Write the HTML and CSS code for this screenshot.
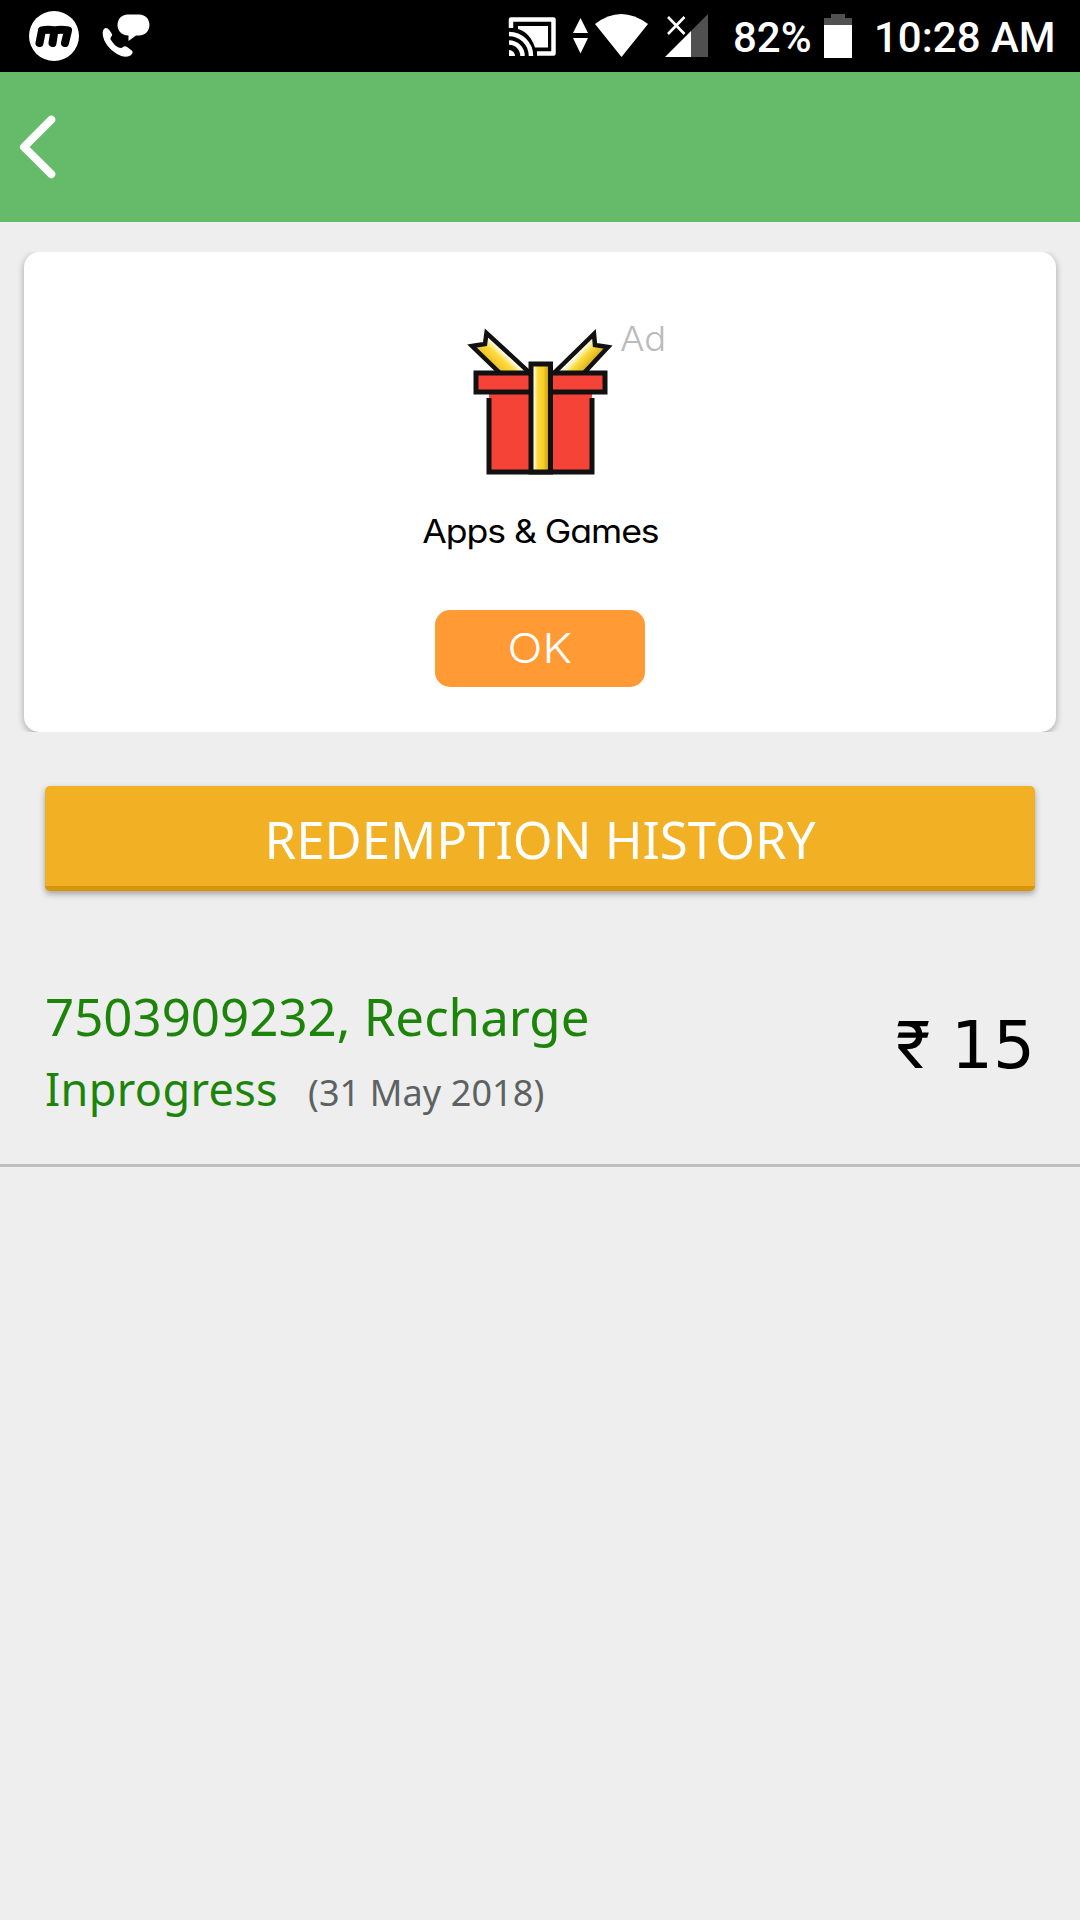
FILE: index.html
```html
<!DOCTYPE html>
<html lang="en">
<head>
<meta charset="utf-8">
<title>Redemption History</title>
<link rel="stylesheet" href="styles.css">
</head>
<body>
<div class="status-bar">
  <svg class="status-left" width="160" height="72" viewBox="0 0 160 72" fill="#fff">
    <circle cx="54" cy="36" r="25"/>
    <path d="M39.500 43 L42 30.500 M52.500 43 L54.500 30.500 M65 43 L68 30.500 M42 30.500 Q48 29 54.500 30.500 Q61 29 68 30.500" fill="none" stroke="#000" stroke-width="8" stroke-linecap="round" stroke-linejoin="round"/>
    <path d="M128 14.500 H139 C153 14.500 153 35.500 139 35.500 H136 L128.500 41 V35.500 C114 35.500 114 14.500 128 14.500Z"/>
    <path d="M104 29 C107 26 110 31 112 34 C113 36 109 38 111 40 C114 45 118 48 121 48 C123 48 124 45 127 47 C131 50 134 51 132 54 C129 58 122 57 117 54 C109 49 104 42 103 36 Q102 31 104 29Z"/>
  </svg>
  <div class="status-right">
    <svg width="230" height="72" viewBox="490 0 230 72" fill="#fff">
      <path d="M511 28 V19.500 H553.500 V53.500 H537" fill="none" stroke="#fff" stroke-width="4.500" stroke-linejoin="round"/>
      <path d="M518 26 H548 V47.500 H535 C532 38 526 31 518 29Z"/>
      <path d="M509 50 A6 6 0 0 1 515 56 H509Z"/>
      <path d="M509 42.500 A13.500 13.500 0 0 1 522.500 56 M509 34 A22 22 0 0 1 531 56" fill="none" stroke="#fff" stroke-width="4.500"/>
      <path d="M580.500 18 L588 33 H573Z M573 38 H588 L580.500 53.500Z"/>
      <path d="M595 24 Q621 4 648 24 L621.500 57Z"/>
      <path d="M691 31 L708 14 V57 H691Z" fill="#505050"/>
      <path d="M665 57 L691 31 V57Z"/>
      <path d="M668 17 L684.500 34 M684.500 17 L668 34" stroke="#fff" stroke-width="2.600"/>
    </svg>
    <span class="battery-level">82%</span>
    <svg class="battery" width="28" height="72" viewBox="824 0 28 72">
      <path d="M831 14 H845 V18 H852 V26 H824 V18 H831Z" fill="#505050"/>
      <path d="M824 25 H852 V58 H824Z" fill="#fff"/>
    </svg>
    <span class="clock">10:28 AM</span>
  </div>
</div>
<header class="app-bar">
  <svg width="60" height="150" viewBox="0 0 60 150">
    <path d="M51.300 47.700 L24 75 L51.300 102.200" fill="none" stroke="#fff" stroke-width="8" stroke-linecap="round" stroke-linejoin="round"/>
  </svg>
</header>
<main>
  <section class="ad-frame">
    <div class="ad-card">
      <div class="gift-wrap">
        <svg width="150" height="150" viewBox="465 327 150 150">
          <defs>
            <linearGradient id="gold"><stop offset=".12" stop-color="#fff"/><stop offset=".34" stop-color="#fddc3c"/><stop offset=".65" stop-color="#f8cd25"/><stop offset=".9" stop-color="#c99c10"/></linearGradient>
            <linearGradient id="goldLeft" gradientUnits="userSpaceOnUse" x1="505" y1="353" x2="492" y2="367"><stop offset="0" stop-color="#fff"/><stop offset=".35" stop-color="#fddc3c"/><stop offset="1" stop-color="#edbb1c"/></linearGradient>
            <linearGradient id="goldRight" gradientUnits="userSpaceOnUse" x1="577" y1="354" x2="591" y2="367"><stop offset="0" stop-color="#fff"/><stop offset=".35" stop-color="#fddc3c"/><stop offset="1" stop-color="#d4a514"/></linearGradient>
          </defs>
          <path d="M472 346 L485 344 L486.500 333 L531 374 H501Z" fill="url(#goldLeft)" stroke="#111" stroke-width="4.500"/>
          <path d="M608 347 L595 345 L594 334 L553 374 H583Z" fill="url(#goldRight)" stroke="#111" stroke-width="4.500"/>
          <path d="M489 394 H592 V472 H489Z" fill="#f64337"/>
          <path d="M489 398 V472 H592 V398" fill="none" stroke="#111" stroke-width="5"/>
          <path d="M476 373 H605 V392 H476Z" fill="#f64337" stroke="#111" stroke-width="5"/>
          <path d="M531 364 H550.500 V472 H531Z" fill="url(#gold)" stroke="#111" stroke-width="5"/>
        </svg>
        <span class="ad-label">Ad</span>
      </div>
      <div class="ad-title">Apps &amp; Games</div>
      <button class="ok-button"><span>OK</span></button>
    </div>
  </section>
  <button class="history-button"><span>REDEMPTION HISTORY</span></button>
  <section class="entry">
    <div class="details">
      <div class="recipient">7503909232, Recharge</div>
      <div class="state-row"><span class="state">Inprogress</span><span class="date">(31 May 2018)</span></div>
    </div>
    <div class="amount"><span class="currency">₹</span> 15</div>
  </section>
</main>
</body>
</html>
```

FILE: styles.css
```css
* { box-sizing: border-box; }
body { margin: 0; width: 1080px; height: 1920px; overflow: hidden; background: #eee; font-family: "Noto Sans", sans-serif; }
svg { display: block; flex: none; }
button { border: 0; padding: 0; }
.status-bar { height: 72px; background: #000; color: #fff; display: flex; justify-content: space-between; font: 500 42px/72px Roboto, sans-serif; white-space: nowrap; }
.status-right { display: flex; padding-right: 26px; }
.battery-level { width: 91px; margin-left: 13px; padding-top: 2px; }
.clock { width: 180px; margin-left: 22px; padding-top: 2px; }
.app-bar { height: 150px; background: #66bb6a; }
.ad-frame { height: 480px; margin-top: 30px; padding: 0 24px; overflow: hidden; }
.ad-card { height: 480px; background: #fff; border-radius: 15px; box-shadow: 0 2px 7px rgba(0,0,0,.32); display: flex; flex-direction: column; align-items: center; padding-top: 75px; font-family: Inter, sans-serif; font-feature-settings: "cv11"; }
.gift-wrap { position: relative; }
.ad-label { position: absolute; left: 155px; top: -8px; font-size: 34px; line-height: 40px; font-weight: 350; color: #bbb; transform: scaleX(1.07); transform-origin: left; }
.ad-title { margin-top: 33px; font-size: 33px; line-height: 42px; color: #000; white-space: nowrap; letter-spacing: -1px; transform: scaleX(1.08); }
.ok-button { width: 210px; height: 77px; margin-top: 58px; border-radius: 15px; background: #ff9a35; color: #fff; font: 300 41px/75px Inter, sans-serif; }
.ok-button span { display: inline-block; transform: scaleX(1.12); }
.history-button { display: block; width: 990px; height: 105px; margin: 54px 45px 0; border-bottom: 5px solid #d6960c; border-radius: 5px; background: #f2b124; box-shadow: 0 3px 6px rgba(0,0,0,.32); color: #fff; font: 51px/106px "Noto Sans", sans-serif; white-space: nowrap; }
.entry { height: 276px; border-bottom: 3px solid #bebebe; display: flex; justify-content: space-between; padding: 89px 45px 0; }
.recipient { font-size: 51px; line-height: 72px; color: #1c8509; }
.state-row { display: flex; align-items: baseline; margin-top: 2px; line-height: 70px; }
.state { font-size: 45px; letter-spacing: .35px; color: #1c8509; }
.date { font-size: 36px; letter-spacing: .1px; color: #5c6261; margin-left: 30px; }
.amount { font: 66px/80px "DejaVu Sans", sans-serif; color: #000; padding-top: 26px; white-space: nowrap; }
.currency { font-family: Roboto, sans-serif; }
```
